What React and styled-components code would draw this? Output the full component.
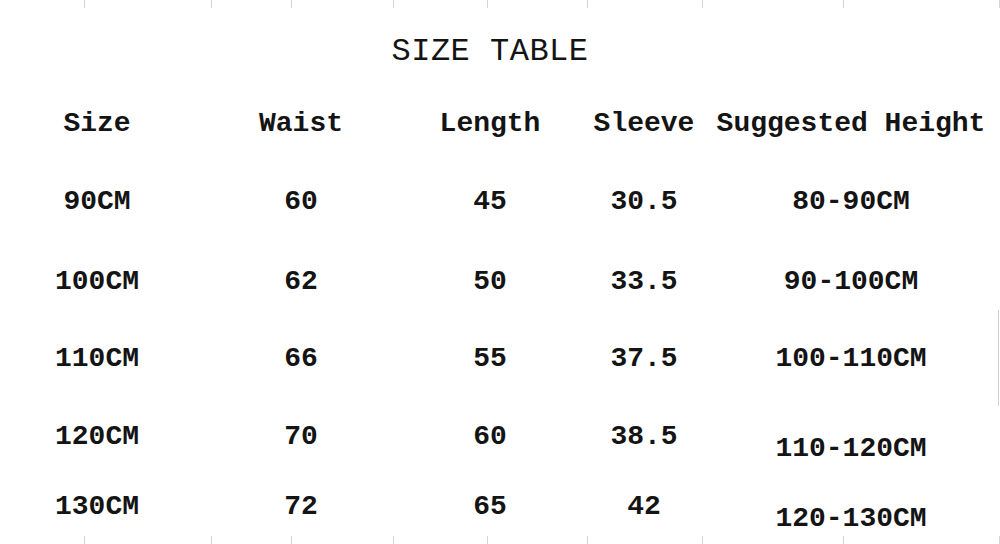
import React from 'react';
import styled, { createGlobalStyle } from 'styled-components';

const GlobalStyle = createGlobalStyle`
  html, body {
    margin: 0;
    padding: 0;
    background: #ffffff;
  }
  body {
    font-family: "Liberation Mono", "DejaVu Sans Mono", monospace;
    color: #141414;
  }
`;

const Sheet = styled.div`
  position: relative;
  display: flex;
  flex-direction: column;
  width: 1000px;
  height: 544px;
  overflow: hidden;
  background: #fff;
`;

const Ruler = styled.div`
  display: flex;
  height: 8px;
  flex-shrink: 0;
  margin-top: ${p => (p.$bottom ? 'auto' : '0')};
`;

const RulerSegment = styled.span`
  box-sizing: border-box;
  height: 100%;
  border-right: 1px solid #d4d4d4;
  flex-shrink: 0;
`;

const Title = styled.h1`
  margin: 0;
  padding-top: 24px;
  width: 980px;
  height: 40px;
  line-height: 40px;
  text-align: center;
  font-size: 32px;
  font-weight: 400;
  letter-spacing: 0.5px;
`;

const Table = styled.div`
  display: grid;
  grid-template-columns: 194px 214px 164px 144px 270px;
  margin-top: 13px;
`;

const Row = styled.div`
  display: contents;
`;

const Cell = styled.div`
  height: ${p => p.$h}px;
  display: flex;
  align-items: center;
  justify-content: center;
  padding-top: ${p => (p.$shift ? p.$shift * 2 : 0)}px;
  box-sizing: border-box;
  font-size: 28px;
  font-weight: 700;
  line-height: 1;
  white-space: nowrap;
`;

const EdgeLine = styled.span`
  position: absolute;
  right: 1px;
  top: 310px;
  width: 1px;
  height: 96px;
  background: #d0d0d0;
`;

const segments = [85, 127, 80, 102, 94, 100, 115, 141, 156];

const header = ['Size', 'Waist', 'Length', 'Sleeve', 'Suggested Height'];

const rows = [
  { h: 78, cells: ['90CM', '60', '45', '30.5', '80-90CM'] },
  { h: 82, cells: ['100CM', '62', '50', '33.5', '90-100CM'] },
  { h: 72, cells: ['110CM', '66', '55', '37.5', '100-110CM'] },
  { h: 84, cells: ['120CM', '70', '60', '38.5', '110-120CM'], shift: 12 },
  { h: 56, cells: ['130CM', '72', '65', '42', '120-130CM'], shift: 12 },
];

const TickRuler = ({ bottom }) => (
  <Ruler $bottom={bottom}>
    {segments.map((w, i) => (
      <RulerSegment key={i} style={{ width: w }} />
    ))}
  </Ruler>
);

const App = () => (
  <>
    <GlobalStyle />
    <Sheet>
      <TickRuler />
      <EdgeLine />

      <Title>SIZE TABLE</Title>

      <Table>
        <Row>
          {header.map(label => (
            <Cell key={label} $h={78}>{label}</Cell>
          ))}
        </Row>
        {rows.map(row => (
          <Row key={row.cells[0]}>
            {row.cells.map((value, i) => (
              <Cell key={i} $h={row.h} $shift={i === 4 ? row.shift : 0}>
                {value}
              </Cell>
            ))}
          </Row>
        ))}
      </Table>

      <TickRuler bottom />
    </Sheet>
  </>
);

export default App;
